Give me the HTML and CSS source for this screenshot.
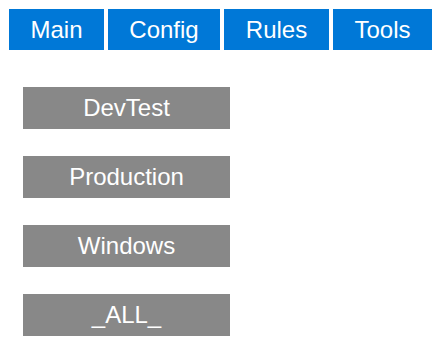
FILE: index.html
```html
<!DOCTYPE html>
<html lang="en">
  <head>
    <meta charset="UTF-8" />
    <meta name="viewport" content="width=device-width, initial-scale=1.0" />
    <title>Rules</title>

    <link rel="stylesheet" href="styles.css">
  </head>

  <body>
    <div id="tabs">
      <div class="tab tab-main">Main</div>
      <div class="tab tab-config">Config</div>
      <div class="tab tab-rules">Rules</div>
      <div class="tab tab-tools">Tools</div>
    </div>

    <div id="env-list">
      <div class="env">DevTest</div>
      <div class="env">Production</div>
      <div class="env">Windows</div>
      <div class="env">_ALL_</div>
    </div>
  </body>
</html>
```

FILE: styles.css
```css
* {
  margin: 0;
  padding: 0;
  box-sizing: border-box;
}

body {
  padding: 9px;
  background-color: white;
  font-family: "Liberation Sans", Arial, sans-serif;
}

#tabs {
  display: flex;
  gap: 4px;
}

.tab {
  height: 41px;
  line-height: 41px;
  text-align: center;
  background-color: rgb(0, 120, 215);
  color: white;
  font-size: 24px;
}

.tab-main {
  width: 95px;
}

.tab-config {
  width: 112px;
}

.tab-rules {
  width: 105px;
}

.tab-tools {
  width: 99px;
}

#env-list {
  display: flex;
  flex-direction: column;
  gap: 27px;
  margin-top: 37px;
  padding-left: 14px;
}

.env {
  width: 207px;
  height: 42px;
  line-height: 42px;
  text-align: center;
  background-color: rgb(136, 136, 136);
  color: white;
  font-size: 24px;
}
```
